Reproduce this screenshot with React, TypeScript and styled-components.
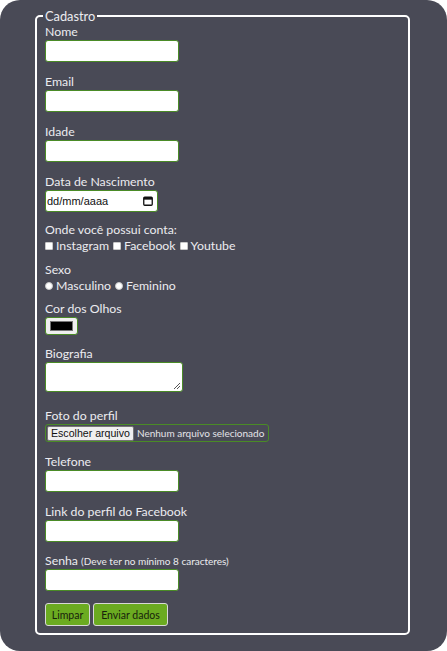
import React from "react";
import styled, { createGlobalStyle } from "styled-components";

const Global = createGlobalStyle`
  html, body { margin: 0; padding: 0; background: #ffffff; }
  body { font-family: "Lato", "Noto Sans", sans-serif; }
  * { box-sizing: border-box; }
`;

const Page = styled.div`
  width: 447px;
  height: 651px;
  background: #494a56;
  border-radius: 20px;
  padding: 8px 37px 0 35px;
`;

const Fieldset = styled.fieldset`
  margin: 0;
  width: 375px;
  height: 627px;
  border: 2px solid #ffffff;
  border-radius: 5px;
  padding: 0 8px;
  display: flex;
  flex-direction: column;
  align-items: flex-start;
  color: #ececf0;
  font-size: 12.3px;
`;

const Legend = styled.legend`
  padding: 0 2px;
  margin-left: -2px;
  font-size: 12.8px;
  line-height: 16px;
  color: #ececf0;
`;

const Label = styled.label<{ $mt?: number }>`
  display: block;
  line-height: 16px;
  margin-top: ${(p) => p.$mt ?? 12}px;
  white-space: nowrap;
`;

const Small = styled.span`
  font-size: 10px;
`;

const TextInput = styled.input`
  display: block;
  width: 134px;
  height: 22px;
  margin: 0;
  border: 1px solid #4a8b26;
  border-radius: 3px;
  background: #ffffff;
  outline: none;
`;

const DateBox = styled.div`
  width: 113px;
  height: 22px;
  border: 1px solid #4a8b26;
  border-radius: 3px;
  background: #ffffff;
  display: flex;
  align-items: center;
  justify-content: space-between;
  padding: 0 4px 0 1px;
  font-family: "Liberation Sans", Arial, sans-serif;
  font-size: 11px;
  color: #111;
`;

const Row = styled.div`
  display: flex;
  align-items: center;
  line-height: 16px;
  white-space: nowrap;
`;

const Option = styled.label`
  display: flex;
  align-items: center;
  margin-right: 4px;
`;

const Check = styled.span<{ $round?: boolean }>`
  width: 8px;
  height: 8px;
  background: #ffffff;
  border: 1px solid #c8c8c8;
  border-radius: ${(p) => (p.$round ? "50%" : "1px")};
  margin-right: 3px;
  flex: none;
`;

const ColorBox = styled.div`
  width: 33px;
  height: 18px;
  border: 1px solid #4a8b26;
  border-radius: 3px;
  background: #efefef;
  padding: 3px 4px;
`;

const Swatch = styled.div`
  width: 100%;
  height: 100%;
  background: #000000;
  border: 1px solid #777;
`;

const TextArea = styled.div`
  position: relative;
  width: 138px;
  height: 30px;
  border: 1px solid #4a8b26;
  border-radius: 3px;
  background: #ffffff;
`;

const Grip = styled.svg`
  position: absolute;
  right: 1px;
  bottom: 1px;
`;

const FileBox = styled.div`
  width: 224px;
  height: 18px;
  border: 1px solid #4a8b26;
  border-radius: 3px;
  display: flex;
  align-items: center;
  padding: 0 0 0 1px;
  white-space: nowrap;
`;

const FileButton = styled.span`
  height: 15px;
  padding: 0 3px;
  background: #efefef;
  border: 1px solid #767676;
  border-radius: 2px;
  font-family: "Liberation Sans", Arial, sans-serif;
  font-size: 10.6px;
  line-height: 13px;
  color: #111;
  margin-right: 3px;
`;

const FileText = styled.span`
  font-size: 10px;
  color: #e4e4e8;
`;

const Buttons = styled.div`
  display: flex;
  gap: 3px;
  margin-top: 12px;
`;

const Button = styled.button<{ $w: number }>`
  width: ${(p) => p.$w}px;
  height: 23px;
  padding: 0;
  background: #6bab21;
  border: 1px solid #d8d8d8;
  border-radius: 3px;
  font-family: "Lato", sans-serif;
  font-size: 10.5px;
  color: #18220c;
`;

const Calendar = () => (
  <svg width="10" height="10" viewBox="0 0 10 10">
    <rect x="0.75" y="1.25" width="8.5" height="8" rx="1" fill="none" stroke="#111" strokeWidth="1.3" />
    <rect x="0.75" y="1.25" width="8.5" height="2.4" fill="#111" />
  </svg>
);

export default function App() {
  return (
    <Page>
      <Global />
      <Fieldset>
        <Legend>Cadastro</Legend>
        <Label $mt={0}>Nome</Label>
        <TextInput />
        <Label>Email</Label>
        <TextInput />
        <Label>Idade</Label>
        <TextInput />
        <Label>Data de Nascimento</Label>
        <DateBox>
          <span>dd/mm/aaaa</span>
          <Calendar />
        </DateBox>
        <Label $mt={10}>Onde você possui conta:</Label>
        <Row>
          <Option><Check />Instagram</Option>
          <Option><Check />Facebook</Option>
          <Option><Check />Youtube</Option>
        </Row>
        <Label $mt={8}>Sexo</Label>
        <Row>
          <Option><Check $round />Masculino</Option>
          <Option><Check $round />Feminino</Option>
        </Row>
        <Label $mt={7}>Cor dos Olhos</Label>
        <ColorBox>
          <Swatch />
        </ColorBox>
        <Label $mt={11}>Biografia</Label>
        <TextArea>
          <Grip width="8" height="8" viewBox="0 0 8 8">
            <path d="M7 1 L1 7 M7 4 L4 7" stroke="#555" strokeWidth="1" />
          </Grip>
        </TextArea>
        <Label $mt={16}>Foto do perfil</Label>
        <FileBox>
          <FileButton>Escolher arquivo</FileButton>
          <FileText>Nenhum arquivo selecionado</FileText>
        </FileBox>
        <Label>Telefone</Label>
        <TextInput />
        <Label>Link do perfil do Facebook</Label>
        <TextInput />
        <Label $mt={11}>
          Senha <Small>(Deve ter no mínimo 8 caracteres)</Small>
        </Label>
        <TextInput type="password" />
        <Buttons>
          <Button $w={45}>Limpar</Button>
          <Button $w={75}>Enviar dados</Button>
        </Buttons>
      </Fieldset>
    </Page>
  );
}
